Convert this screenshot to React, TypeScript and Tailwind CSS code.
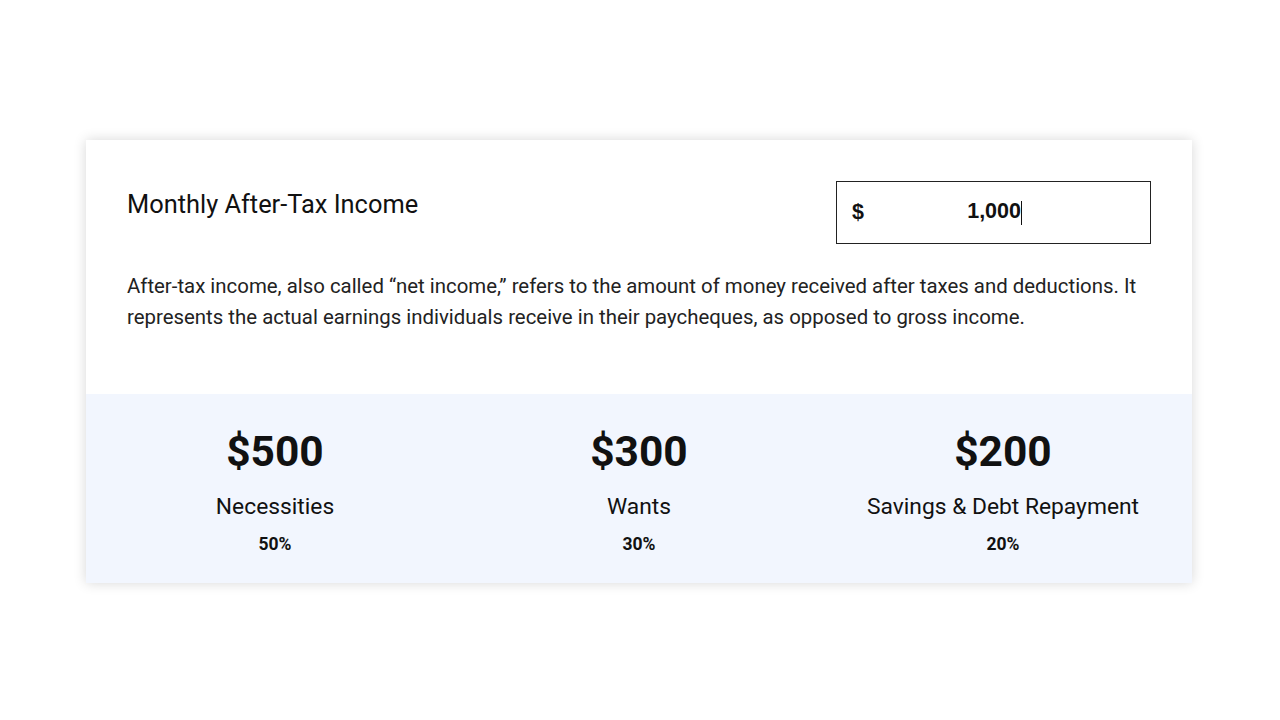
const splits = [
  { amount: "$500", label: "Necessities", pct: "50%" },
  { amount: "$300", label: "Wants", pct: "30%" },
  { amount: "$200", label: "Savings & Debt Repayment", pct: "20%" },
];

export default function App() {
  return (
    <div className="min-h-screen w-full bg-white pt-[140px] font-['Roboto',sans-serif] text-[#111]">
      <div className="mx-auto w-[1106px] translate-x-[-1px] bg-white shadow-[0_0_12px_rgba(0,0,0,0.16)]">
        <div className="px-[41px] pt-[41px] pb-[61px]">
          <div className="flex items-start justify-between">
            <h2 className="mt-[5px] text-[25.4px] leading-[36px] font-normal">
              Monthly After-Tax Income
            </h2>
            <div className="relative flex h-[63px] w-[315px] items-center border border-[#222] px-[15px] font-['Liberation_Sans',Arial,sans-serif] text-[21.5px] font-bold">
              <span>$</span>
              <span className="absolute right-[129px] -translate-y-px">1,000</span>
              <span className="absolute left-[184px] h-[24px] w-px bg-[#111]" />
            </div>
          </div>
          <p className="mt-[27px] text-[20.4px] leading-[31px] text-[#222]">
            After-tax income, also called “net income,” refers to the amount of money received after
            taxes and deductions. It represents the actual earnings individuals receive in their
            paycheques, as opposed to gross income.
          </p>
        </div>
        <div className="grid grid-cols-3 bg-[#f2f6fe] px-[7px] pt-[33px] pb-[27px]">
          {splits.map((s) => (
            <div key={s.label} className="flex flex-col items-center text-center">
              <div className="text-[42.5px] leading-[50px] font-bold">{s.amount}</div>
              <div className="mt-[13px] text-[22.8px] leading-[33px]">{s.label}</div>
              <div className="mt-[9px] text-[17.5px] leading-[24px] font-bold">{s.pct}</div>
            </div>
          ))}
        </div>
      </div>
    </div>
  );
}
